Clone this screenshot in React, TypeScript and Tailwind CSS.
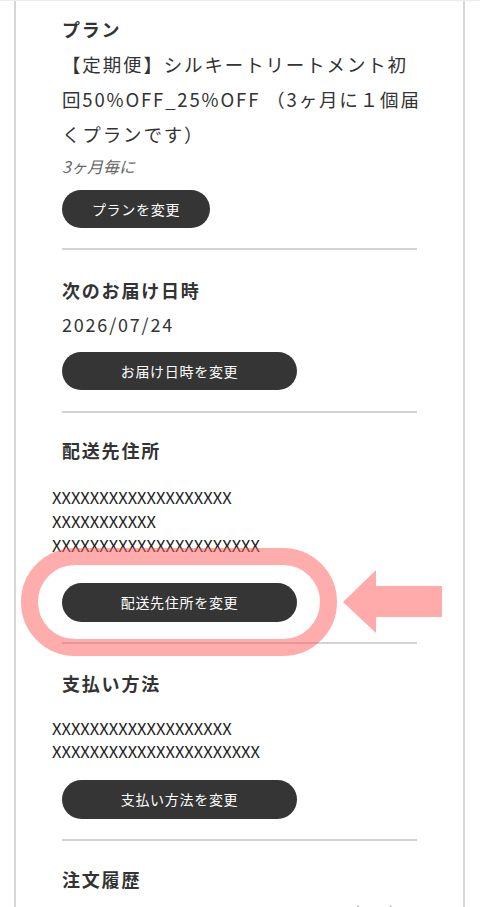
import React from "react";

const font = { fontFamily: '"Noto Sans CJK JP", "Noto Sans", sans-serif' };

function Heading({ children }: { children: React.ReactNode }) {
  return (
    <h3 className="text-[18px] leading-[28px] font-bold tracking-[0.1em] text-[#333]">
      {children}
    </h3>
  );
}

function PillButton({ label, w, h, mt }: { label: string; w: string; h: string; mt: string }) {
  return (
    <button
      className={`${w} ${h} ${mt} flex items-center justify-center rounded-full bg-[#353535] text-white text-[14px] tracking-[0.05em]`}
    >
      {label}
    </button>
  );
}

export default function App() {
  return (
    <div className="w-full h-[907px] overflow-hidden bg-white border-t border-[#ececec]" style={font}>
      <div className="ml-[14px] mr-[15px] h-full border-x-2 border-[#d6d6d6] px-[46px] text-[#333]">
        {/* Plan */}
        <section className="pt-[14px] pb-[20px] border-b-2 border-[#d3d3d3]">
          <Heading>プラン</Heading>
          <p className="mt-[4px] text-[18.5px] leading-[35px] tracking-[0.1em] whitespace-nowrap">
            【定期便】シルキートリートメント初
            <br />
            回50%OFF_25%OFF （3ヶ月に１個届
            <br />
            くプランです）
          </p>
          <p className="mt-[3px] text-[16px] leading-[22px] italic text-[#666]">3ヶ月毎に</p>
          <div className="mt-[13px]">
            <PillButton label="プランを変更" w="w-[148px]" h="h-[38px]" mt="mt-0" />
          </div>
        </section>

        {/* Next delivery */}
        <section className="pt-[26px] pb-[21px] border-b-2 border-[#d3d3d3]">
          <Heading>次のお届け日時</Heading>
          <p className="mt-[6px] text-[18px] leading-[28px] tracking-[0.1em]">2026/07/24</p>
          <PillButton label="お届け日時を変更" w="w-[235px]" h="h-[38px]" mt="mt-[14px]" />
        </section>

        {/* Shipping address */}
        <section className="pt-[23px] pb-[20px] border-b-2 border-[#d3d3d3]">
          <Heading>配送先住所</Heading>
          <div className="mt-[21px] -ml-[10px] text-[16.5px] leading-[24px] text-[#222]">
            <p>XXXXXXXXXXXXXXXXXXX</p>
            <p>XXXXXXXXXXX</p>
            <p>XXXXXXXXXXXXXXXXXXXXXX</p>
          </div>
          <div className="relative mt-[26px]">
            <PillButton label="配送先住所を変更" w="w-[235px]" h="h-[39px]" mt="mt-0" />
            <div className="pointer-events-none absolute -left-[41px] -top-[35px] w-[316px] h-[108px] rounded-full border-[17px] border-[rgba(255,90,90,0.5)]" />
            <svg
              className="pointer-events-none absolute left-[281px] -top-[13px]"
              width="99"
              height="64"
              viewBox="0 0 99 64"
            >
              <polygon points="0,32 33,0 33,16 99,16 99,47 33,47 33,63" fill="#ffabab" />
            </svg>
          </div>
        </section>

        {/* Payment */}
        <section className="pt-[25px] pb-[20px] border-b-2 border-[#d3d3d3]">
          <Heading>支払い方法</Heading>
          <div className="mt-[20px] -ml-[10px] text-[16.5px] leading-[23px] text-[#222]">
            <p>XXXXXXXXXXXXXXXXXXX</p>
            <p>XXXXXXXXXXXXXXXXXXXXXX</p>
          </div>
          <PillButton label="支払い方法を変更" w="w-[235px]" h="h-[39px]" mt="mt-[17px]" />
        </section>

        {/* Order history */}
        <section className="pt-[24px]">
          <Heading>注文履歴</Heading>
          <div className="mt-[5px] flex justify-between text-[18px] leading-[28px] tracking-[0.1em] text-[#999]">
            <span>00000</span>
            <span>2026/04/10</span>
          </div>
        </section>
      </div>
    </div>
  );
}
